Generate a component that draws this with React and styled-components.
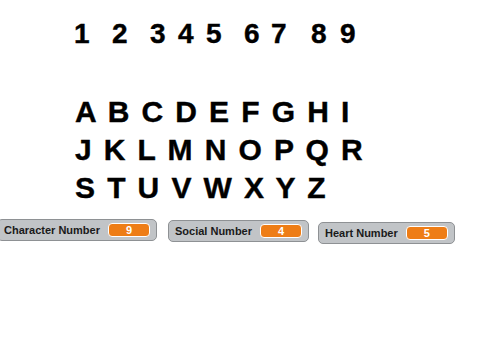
import React from 'react';
import styled, { createGlobalStyle } from 'styled-components';

const GlobalStyle = createGlobalStyle`
    html, body {
        margin: 0;
        padding: 0;
        background: #ffffff;
    }
`

// left edge of each digit sprite on the stage
const digitSpots = [74, 112, 150, 178, 206, 244, 271, 311, 340];

const monitors = [
    { label: 'Character Number', value: 9, dx: -3, dy: 0 },
    { label: 'Social Number', value: 4, dx: 11, dy: 1 },
    { label: 'Heart Number', value: 5, dx: 9, dy: 3 }
];

const letterRows = ['A B C D E F G H I', 'J K L M N O P Q R', 'S T U V W X Y Z'];

const App = () => {
    return(<Stage>
        <GlobalStyle />
        <Digits>
            {digitSpots.map((x, i) => (
                <Digit key={i} $gap={i === 0 ? x : x - digitSpots[i - 1] - 16}>{i + 1}</Digit>
            ))}
        </Digits>
        <Letters>
            {letterRows.map(row => <LetterRow key={row}>{row}</LetterRow>)}
        </Letters>
        <MonitorRow>
            {monitors.map(m => (
                <Monitor key={m.label} $dx={m.dx} $dy={m.dy}>
                    <MonitorLabel>{m.label}</MonitorLabel>
                    <MonitorValue>{m.value}</MonitorValue>
                </Monitor>
            ))}
        </MonitorRow>
    </Stage>);
}

export default App;

const Stage = styled.div`
    width: 480px;
    height: 360px;
    overflow: hidden;
    background: #ffffff;
    display: flex;
    flex-direction: column;
    font-family: "Liberation Sans", Arial, sans-serif;
`

const Digits = styled.div`
    margin-top: 20px;
    height: 28px;
    display: flex;
`

const Digit = styled.span`
    width: 16px;
    margin-left: ${p => p.$gap}px;
    font-size: 28px;
    line-height: 28px;
    font-weight: bold;
    color: #000;
    -webkit-text-stroke: 0.4px #000;
`

const Letters = styled.div`
    margin-top: 45px;
    padding-left: 75px;
    display: flex;
    flex-direction: column;
`

const LetterRow = styled.div`
    height: 38px;
    font-size: 30px;
    line-height: 38px;
    font-weight: bold;
    letter-spacing: 1.9px;
    white-space: pre;
    color: #000;
    -webkit-text-stroke: 0.4px #000;
`

const MonitorRow = styled.div`
    margin-top: 12px;
    display: flex;
    align-items: flex-start;
`

const Monitor = styled.div`
    margin-left: ${p => p.$dx}px;
    margin-top: ${p => p.$dy}px;
    display: flex;
    align-items: center;
    gap: 8px;
    height: 20px;
    padding: 0 6px 0 6px;
    background: #c1c4c7;
    border: 1px solid #8e9194;
    border-radius: 5px;
`

const MonitorLabel = styled.span`
    font-size: 11px;
    font-weight: bold;
    color: #1a1a1a;
    white-space: nowrap;
`

const MonitorValue = styled.span`
    box-sizing: border-box;
    width: 42px;
    height: 14px;
    line-height: 12px;
    background: #ee7d16;
    border: 1px solid #ffffff;
    border-radius: 4px;
    color: #ffffff;
    font-size: 11px;
    font-weight: bold;
    text-align: center;
`
